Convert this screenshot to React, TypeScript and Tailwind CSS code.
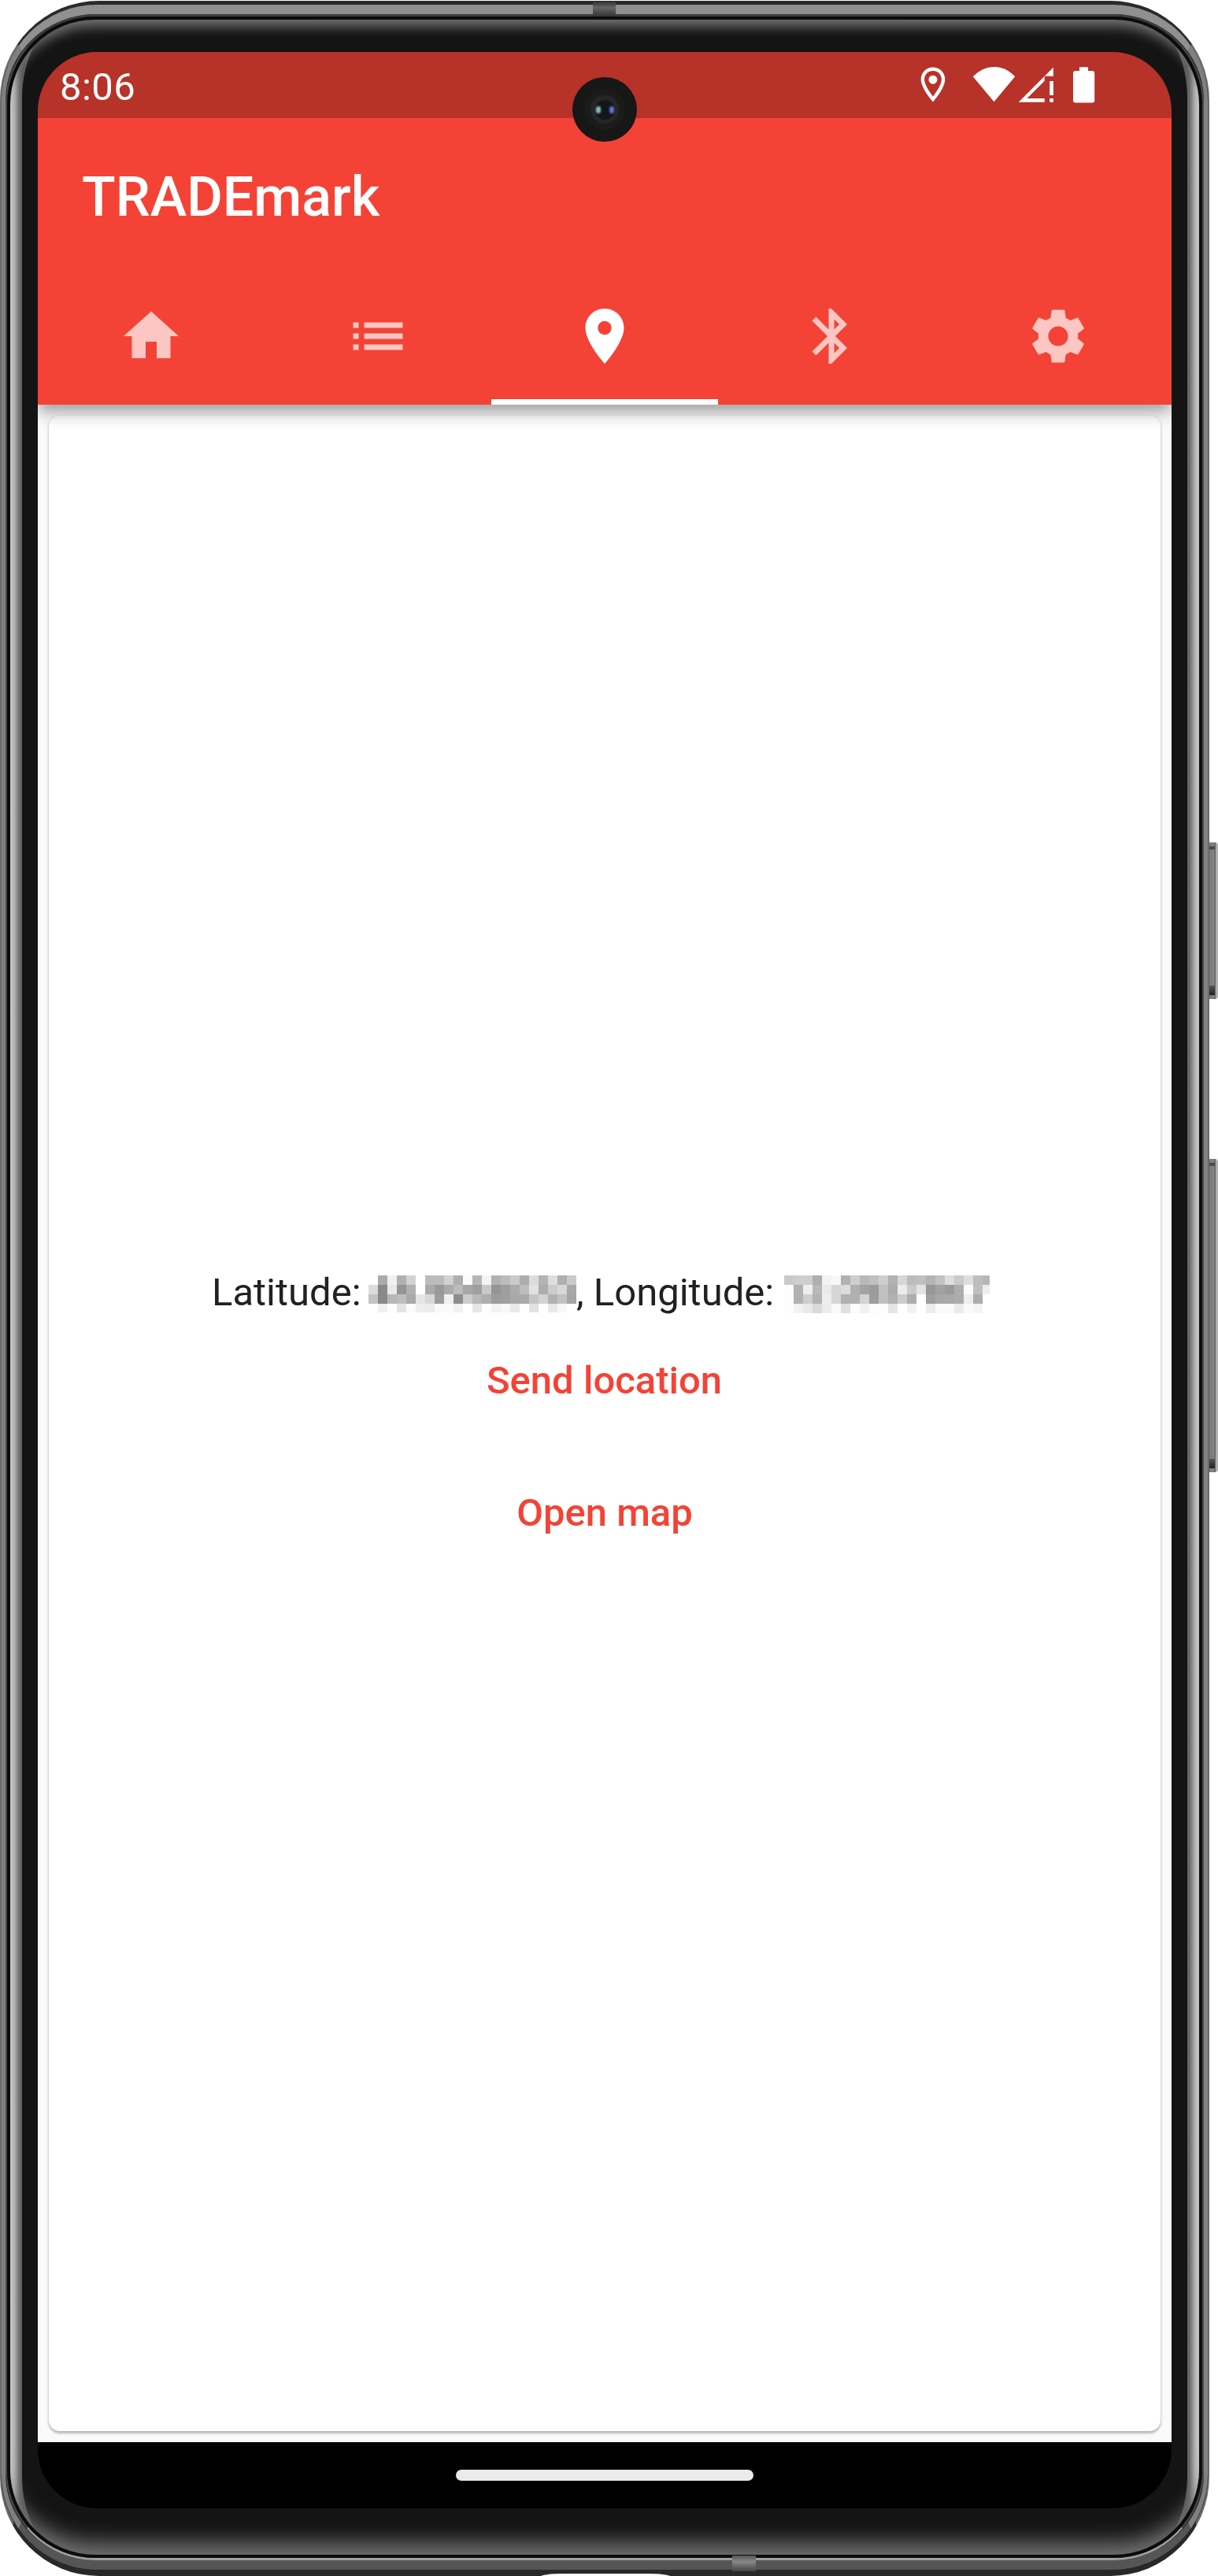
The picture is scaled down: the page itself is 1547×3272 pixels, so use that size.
import React from "react";
import { MdHome, MdList, MdLocationOn, MdBluetooth, MdSettings } from "react-icons/md";

// Grey levels of the obscured coordinates, one row of 22 cells per line.
const LATITUDE: string[][] = [
  "ff ab f0 b0 d2 ff bc bc d1 af fb b6 f4 b2 bc ca ad dc b4 de b0 cb".split(" "),
  "dc 89 e9 95 b0 ff aa 99 aa bc a6 9f c9 95 9d ab bd e2 ad cc d8 a8".split(" "),
  "c4 88 b6 bd aa e6 d8 9c f0 8e cc b8 ae 9d 9f a9 a9 c5 d2 b1 c2 a5".split(" "),
  "ff f0 fd e3 fb ee ec fa fa f1 ff e6 fd f2 f8 e9 fd e2 ff e8 f8 ff".split(" "),
];

const LONGITUDE: string[][] = [
  "ca ce ce ae f2 f8 b1 ce b8 c0 ce b1 d7 bc c0 b4 c2 de cb de bd b7".split(" "),
  "fd b1 ee b9 ea d5 dc b0 a3 9b c0 ac ec ca e3 97 a2 9b ad fb bf ee".split(" "),
  "fc b1 ce b3 ee d6 b1 b1 d3 9d c1 b1 cc ad ff 9f a8 a9 ac ee ad ff".split(" "),
  "fd f2 e9 d9 ec f9 e0 fb f2 fc fd e5 ff f2 ff ec fa fa eb fa f4 ff".split(" "),
];

function Mosaic({ rows, className }: { rows: string[][]; className: string }) {
  return (
    <span className={`grid shrink-0 grid-cols-[repeat(22,12px)] grid-rows-[12px_12px_12px_12px] overflow-hidden ${className}`}>
      {rows.flatMap((row, y) =>
        row.map((v, x) => <span key={`${x}-${y}`} style={{ backgroundColor: `#${v}${v}${v}` }} />)
      )}
    </span>
  );
}

function StatusBar() {
  return (
    <div className="relative flex h-[84px] shrink-0 items-center justify-between bg-[#b73229] text-white">
      <span className="pl-[28px] pt-[5px] text-[49px] leading-[58px] tracking-[0.4px]">8:06</span>
      <svg className="mr-[97px] h-[84px] w-[224px]" viewBox="1167 66 224 84" fill="currentColor">
        <path
          fillRule="evenodd"
          d="M1185 85.5c-8.6 0-15.3 6.6-15.3 15.3 0 11.5 15.3 28.7 15.3 28.7s15.3-17.2 15.3-28.7c0-8.7-6.7-15.3-15.3-15.3zm0 4.5c6.1 0 10.900 4.700 10.900 10.800 0 6.500-6 15.300-10.900 21.900-4.900-6.600-10.900-15.400-10.900-21.900 0-6.100 4.800-10.800 10.900-10.800z"
        />
        <circle cx="1185" cy="101.200" r="5.500" />
        <path d="M1235.800 97.300Q1247.500 85 1262.500 85T1289.200 97.300L1262.500 129.300z" />
        <path d="M1293.700 129.700L1326.700 96.700V102.700L1304.400 125H1326.700V129.700z" />
        <path d="M1326.700 96.700L1337.900 85.500V96.700z" />
        <path d="M1333.200 103h4.700v18h-4.700z M1333.200 125h4.700v4.700h-4.700z" />
        <path d="M1371 85.300h11v4.700h5.200a3 3 0 0 1 3 3v34.500a3 3 0 0 1-3 3h-21.200a3 3 0 0 1-3-3V93a3 3 0 0 1 3-3h5z" />
      </svg>
      <div className="absolute left-[679px] top-[32px] flex size-[82px] items-center justify-center rounded-full bg-[#171717]">
        <div className="flex size-[52px] items-center justify-center rounded-full bg-[#1b1b1b]">
          <div className="flex size-[36px] items-center justify-center rounded-full bg-[#262626]">
            <div className="flex size-[25px] items-center justify-between rounded-full bg-[#11171b] px-[1px]">
              <span className="h-[9px] w-[6px] rounded-[3px] bg-[#7fc0c2] blur-[1px]" />
              <span className="h-[9px] w-[6px] rounded-[3px] bg-[#6474d0] blur-[1px]" />
            </div>
          </div>
        </div>
      </div>
    </div>
  );
}

const TABS = [
  { name: "Home", Icon: MdHome },
  { name: "List", Icon: MdList },
  { name: "Location", Icon: MdLocationOn },
  { name: "Bluetooth", Icon: MdBluetooth },
  { name: "Settings", Icon: MdSettings },
];

function AppBar() {
  return (
    <header className="relative z-10 shrink-0 bg-[#f44336] text-white shadow-[0_7px_14px_-3px_rgba(0,0,0,0.2),0_14px_17px_rgba(0,0,0,0.14),0_3px_35px_rgba(0,0,0,0.12)]">
      <div className="flex h-[196px] items-center px-14">
        <h1 className="pt-[3px] text-[70px] font-medium leading-[82px]">TRADEmark</h1>
      </div>
      <nav className="grid h-[168px] grid-cols-5">
        {TABS.map(({ name, Icon }) => (
          <button
            key={name}
            aria-label={name}
            className={
              name === "Location"
                ? "flex items-center justify-center border-b-[7px] border-white text-white"
                : "flex items-center justify-center border-b-[7px] border-transparent text-white/70"
            }
          >
            <Icon className="size-[84px]" />
          </button>
        ))}
      </nav>
    </header>
  );
}

function Screen() {
  return (
    <div className="relative flex h-[3120px] w-[1440px] flex-col overflow-hidden rounded-[75px] bg-black">
      <div className="relative z-20">
        <StatusBar />
      </div>
      <AppBar />
      <main className="flex min-h-0 flex-1 flex-col bg-[#fafafa] p-[14px]">
        <section className="flex flex-1 flex-col items-center justify-center rounded-[14px] bg-white pt-[2px] shadow-[0_3px_3px_rgba(0,0,0,0.2),0_1px_4px_rgba(0,0,0,0.16)]">
          <p className="flex h-[57px] w-full pl-[207px] text-[49px] leading-[57px] text-[#212121]">
            <span className="w-[199px] shrink-0 whitespace-pre">Latitude: </span>
            <span className="pt-[7px]">
              <Mosaic rows={LATITUDE} className="h-[47px] w-[264px]" />
            </span>
            <span className="w-[264px] shrink-0 whitespace-pre">, Longitude: </span>
            <span className="pt-[7px]">
              <Mosaic rows={LONGITUDE} className="h-[48px] w-[261px]" />
            </span>
          </p>
          <button className="h-[168px] pr-px text-[49px] font-medium text-[#f44336]">Send location</button>
          <button className="h-[168px] text-[49px] font-medium text-[#f44336]">Open map</button>
        </section>
      </main>
      <div className="flex h-[84px] shrink-0 items-center justify-center">
        <div className="h-[14px] w-[378px] rounded-full bg-[#ebebeb]" />
      </div>
    </div>
  );
}

function SideButton({ className }: { className: string }) {
  return (
    <div
      className={`absolute left-[1533px] flex w-[14px] flex-col justify-between rounded-r-[4px] bg-[linear-gradient(90deg,#555_0,#777_3px,#858585_9px,#555_10px,#bbb_12px,#aaa)] py-[5px] pl-[3px] pr-[4px] ${className}`}
    >
      <span className="h-[4px] bg-[#4a4a4a]" />
      <span className="h-[12px] bg-[linear-gradient(#555,#222)]" />
    </div>
  );
}

export default function App() {
  return (
    <div className="relative h-[3272px] w-[1547px] overflow-hidden bg-white font-[Roboto,sans-serif]">
      <SideButton className="top-[1070px] h-[199px]" />
      <SideButton className="top-[1472px] h-[398px]" />
      <div className="relative mt-px flex h-[3271px] w-[1536px] flex-col rounded-[126px] border-x-2 border-b-[8px] border-t-[5px] border-x-[#6a6a6a] border-b-[#282828] border-t-[#2a2a2a] bg-[#222]">
        <div className="flex flex-1 flex-col rounded-[121px] border-x-[5px] border-b-[12px] border-t-[12px] border-x-[#808080] border-b-[#555] border-t-[#909090]">
          <div className="flex flex-1 flex-col rounded-[114px] border-x-2 border-b-[3px] border-t-[3px] border-x-[#4a4a4a] border-b-[#a0a0a0] border-t-[#3c3c3c]">
            <div className="flex flex-1 flex-col rounded-[112px] border-x-[4px] border-b-[4px] border-t-[4px] border-[#0c0c0c]">
              <div className="relative flex flex-1 flex-col overflow-hidden rounded-[108px] bg-[linear-gradient(90deg,#d0d0d0_0,#b5b5b5_5px,#6c6c6c_12px,#5a5a5a_16px,#5a5a5a_1494px,#6c6c6c_1498px,#b5b5b5_1505px,#d0d0d0)] px-[15px]">
                <div className="absolute inset-0 z-10 rounded-[108px] shadow-[inset_0_22px_16px_-14px_#777,inset_0_-36px_26px_-20px_#707070]" />
                <div className="flex flex-1 justify-center rounded-[60px/100px] bg-[#141414] pt-[41px]">
                  <div className="relative z-20 h-[3120px]">
                    <Screen />
                  </div>
                </div>
              </div>
            </div>
          </div>
        </div>
      </div>
      <div className="absolute left-[393px] top-[24px] h-[3px] w-[754px] rounded-b-[3px] bg-[#111]" />
      <div className="absolute left-[753px] top-[2px] h-[19px] w-[29px] bg-[linear-gradient(#333,#666_40%,#333)]" />
      <div className="absolute left-[930px] top-[3246px] h-[20px] w-[30px] bg-[linear-gradient(#555,#888_40%,#444)]" />
      <div className="absolute left-[686px] top-[3269px] h-[12px] w-[166px] rounded-[30px/4px] bg-white" />
    </div>
  );
}
